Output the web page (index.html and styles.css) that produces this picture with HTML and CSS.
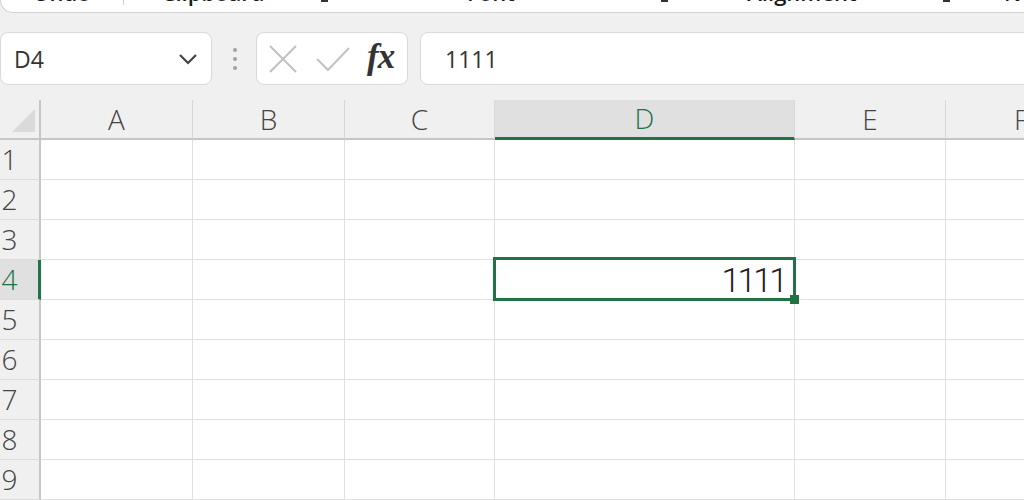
FILE: index.html
```html
<!DOCTYPE html>
<html>
<head>
<meta charset="utf-8">
<link rel="stylesheet" href="styles.css">
</head>
<body>
<div class="app">
  <div class="ribbon">
    <div class="group g-undo"><span class="glabel">Undo</span></div>
    <div class="group g-clip"><span class="glabel">Clipboard</span><svg class="launch" viewBox="0 0 14 14"><path d="M2 2 L11 11 M11 5 V11 H5" /></svg></div>
    <div class="group g-font"><span class="glabel">Font</span><svg class="launch" viewBox="0 0 14 14"><path d="M2 2 L11 11 M11 5 V11 H5" /></svg></div>
    <div class="group g-align"><span class="glabel">Alignment</span><svg class="launch" viewBox="0 0 14 14"><path d="M2 2 L11 11 M11 5 V11 H5" /></svg></div>
    <div class="group g-num"><span class="glabel left">Number</span></div>
  </div>

  <div class="fbar">
    <div class="namebox">
      <span class="nbtext">D4</span>
      <svg class="chev" viewBox="0 0 20 12"><polyline points="2,2 10,10 18,2" /></svg>
    </div>
    <div class="grip">
      <svg viewBox="0 0 6 24" class="dots"><circle cx="3" cy="3" r="2"/><circle cx="3" cy="12" r="2"/><circle cx="3" cy="21" r="2"/></svg>
    </div>
    <div class="fbtns">
      <svg class="ico-x" viewBox="0 0 28 28"><path d="M1 1 L27 27 M27 1 L1 27" /></svg>
      <svg class="ico-ok" viewBox="0 0 34 24"><polyline points="1,12 12,23 33,1" /></svg>
      <span class="fx">fx</span>
    </div>
    <div class="finput">1111</div>
  </div>

  <div class="sheet">
    <div class="hc corner"><svg viewBox="0 0 39 38" class="tri"><polygon points="12,32 35,32 35,9" /></svg></div>
    <div class="hc col">A</div>
    <div class="hc col">B</div>
    <div class="hc col">C</div>
    <div class="hc col sel">D</div>
    <div class="hc col">E</div>
    <div class="hc col">F</div>

    <div class="rh">1</div><div class="c"></div><div class="c"></div><div class="c"></div><div class="c"></div><div class="c"></div><div class="c"></div>
    <div class="rh">2</div><div class="c"></div><div class="c"></div><div class="c"></div><div class="c"></div><div class="c"></div><div class="c"></div>
    <div class="rh">3</div><div class="c"></div><div class="c"></div><div class="c"></div><div class="c"></div><div class="c"></div><div class="c"></div>
    <div class="rh sel">4</div><div class="c"></div><div class="c"></div><div class="c"></div><div class="c active"><span class="val">1111</span><span class="handle"></span></div><div class="c"></div><div class="c"></div>
    <div class="rh">5</div><div class="c"></div><div class="c"></div><div class="c"></div><div class="c"></div><div class="c"></div><div class="c"></div>
    <div class="rh">6</div><div class="c"></div><div class="c"></div><div class="c"></div><div class="c"></div><div class="c"></div><div class="c"></div>
    <div class="rh">7</div><div class="c"></div><div class="c"></div><div class="c"></div><div class="c"></div><div class="c"></div><div class="c"></div>
    <div class="rh">8</div><div class="c"></div><div class="c"></div><div class="c"></div><div class="c"></div><div class="c"></div><div class="c"></div>
    <div class="rh">9</div><div class="c"></div><div class="c"></div><div class="c"></div><div class="c"></div><div class="c"></div><div class="c"></div>
  </div>
</div>
</body>
</html>
```

FILE: styles.css
```css
html, body {
  margin: 0;
  padding: 0;
  background: #f0f0f0;
  overflow: hidden;
}
.app {
  width: 1024px;
  height: 500px;
  overflow: hidden;
  font-family: "Open Sans", "Noto Sans", sans-serif;
  color: #333;
}

/* ribbon strip (only bottom visible) */
.ribbon {
  display: flex;
  height: 12px;
  width: 1100px;
  background: #fff;
  border-left: 1px solid #d2d2d2;
  border-bottom: 1px solid #d2d2d2;
  border-bottom-left-radius: 14px;
  overflow: hidden;
}
.group {
  display: flex;
  align-items: flex-start;
  height: 12px;
  flex: none;
}
.glabel {
  flex: 1;
  text-align: center;
  font-size: 22px;
  line-height: 22px;
  margin-top: -19px;
  color: #1a1a1a;
  font-weight: 600;
  white-space: nowrap;
}
.glabel.left { text-align: left; padding-left: 42px; }
.g-undo { width: 122px; border-right: 1px solid #cfcfcf; height: 5px; }
.g-clip { width: 216px; }
.g-font { width: 340px; }
.g-align { width: 282px; }
.g-num { width: 300px; }
.launch {
  width: 14px;
  height: 14px;
  margin: -10px 10px 0 14px;
  fill: none;
  stroke: #333;
  stroke-width: 2;
  flex: none;
}

/* formula bar */
.fbar {
  display: flex;
  margin-top: 19px;
  height: 53px;
}
.namebox, .fbtns, .finput {
  box-sizing: border-box;
  height: 53px;
  background: #fff;
  border: 1px solid #d9d9d9;
  border-radius: 8px;
  display: flex;
  align-items: center;
}
.namebox {
  width: 212px;
  padding: 0 13px 0 13px;
  justify-content: space-between;
}
.nbtext {
  font-size: 23px;
  color: #333;
}
.chev {
  width: 20px;
  height: 12px;
  fill: none;
  stroke: #444;
  stroke-width: 2.2;
}
.grip {
  width: 44px;
  display: flex;
  align-items: center;
  justify-content: center;
}
.dots {
  width: 6px;
  height: 24px;
  fill: #a0a0a0;
  margin-left: 1px;
}
.fbtns {
  width: 152px;
  padding-left: 12px;
}
.ico-x {
  width: 28px;
  height: 28px;
  fill: none;
  stroke: #c2c2c2;
  stroke-width: 2;
}
.ico-ok {
  width: 34px;
  height: 24px;
  margin-left: 19px;
  fill: none;
  stroke: #c2c2c2;
  stroke-width: 2;
}
.fx {
  margin-left: 17px;
  font-family: "Liberation Serif", "DejaVu Serif", serif;
  font-style: italic;
  font-weight: bold;
  font-size: 35px;
  color: #333;
  letter-spacing: -1px;
  line-height: 1;
  margin-top: -4px;
}
.finput {
  flex: 1;
  margin-left: 12px;
  margin-right: -30px;
  padding-left: 24px;
  font-size: 23px;
  color: #333;
}

/* sheet */
.sheet {
  margin-top: 15px;
  display: grid;
  width: 1200px;
  grid-template-columns: 41px 152px 152px 150px 300px 151px 151px;
  grid-auto-rows: 40px;
}
.hc {
  box-sizing: border-box;
  background: #f0f0f0;
  border-bottom: 2px solid #c6c6c6;
  font-size: 28px;
  font-weight: 300;
  line-height: 38px;
  text-align: center;
  color: #444;
}
.col {
  border-right: 1px solid #d8d8d8;
}
.corner {
  border-right: 2px solid #c6c6c6;
}
.tri {
  display: block;
  width: 39px;
  height: 38px;
  fill: #dadada;
}
.hc.sel {
  background: #e0e0e0;
  color: #217346;
  border-bottom: 3px solid #217346;
  line-height: 37px;
}
.rh {
  box-sizing: border-box;
  background: #f0f0f0;
  border-right: 2px solid #c6c6c6;
  border-bottom: 1px solid #dcdcdc;
  font-size: 28px;
  font-weight: 300;
  line-height: 39px;
  padding-right: 20px;
  text-align: center;
  color: #444;
}
.rh.sel {
  background: #e0e0e0;
  color: #217346;
  border-right: 3px solid #217346;
  padding-right: 19px;
}
.c {
  box-sizing: border-box;
  background: #fff;
  border-right: 1px solid #e1e1e1;
  border-bottom: 1px solid #e1e1e1;
}
.c.active {
  position: relative;
  display: flex;
  align-items: center;
  justify-content: flex-end;
  padding-right: 9px;
}
.c.active::before {
  content: "";
  position: absolute;
  left: -2px;
  top: -3px;
  right: -2px;
  bottom: -2px;
  border: 3px solid #217346;
  z-index: 2;
}
.val {
  font-family: Roboto, "Open Sans", sans-serif;
  font-size: 34px;
  font-weight: 300;
  letter-spacing: -3px;
  color: #222;
  line-height: 1;
  margin-top: 1px;
}
.handle {
  position: absolute;
  right: -5px;
  bottom: -5px;
  width: 9px;
  height: 9px;
  background: #217346;
  z-index: 3;
}
```
